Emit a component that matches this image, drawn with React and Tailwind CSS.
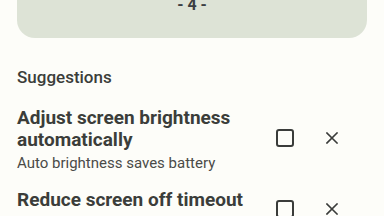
import React from "react";

function Check() {
  return <div className="w-[18px] h-[18px] border-2 border-[#3a3c3a] rounded-[3px]" />;
}

function XIcon() {
  return (
    <svg width="12" height="12" viewBox="0 0 12 12" className="block">
      <path d="M1 1 L11 11 M11 1 L1 11" stroke="#3a3c3a" strokeWidth="1.6" strokeLinecap="square" />
    </svg>
  );
}

function Row({ title, sub }) {
  return (
    <div className="flex items-center">
      <div className="flex-1 min-w-0">
        <div className="text-[19px] leading-[22px] font-bold text-[#3b3d3a] w-[240px]">{title}</div>
        <div className="text-[15px] leading-[20px] mt-[1.5px] text-[#4a4b48]">{sub}</div>
      </div>
      <div className="w-[18px] flex justify-center mb-[3px]"><Check /></div>
      <div className="w-[32px]" />
      <div className="w-[12px] flex justify-center mb-[3px]"><XIcon /></div>
      <div className="w-[29px]" />
    </div>
  );
}

export default function App() {
  return (
    <div className="w-[384px] h-[216px] overflow-hidden bg-[#fdfdf9]" style={{ fontFamily: "Roboto, 'Noto Sans', sans-serif" }}>
      <div className="px-[17px]">
        <div className="h-[38px] bg-[#dde3d6] rounded-b-[18px] flex justify-center">
          <div className="text-[16px] leading-[16px] font-bold text-[#3b3f44] mt-[-3.5px]">- 4 -</div>
        </div>
      </div>
      <div className="px-[17px]">
        <div className="mt-[27px] text-[17px] leading-[24px] font-medium text-[#3b3d3a]">Suggestions</div>
        <div className="mt-[18px] flex flex-col gap-[16.5px]">
          <Row title="Adjust screen brightness automatically" sub="Auto brightness saves battery" />
          <Row title="Reduce screen off timeout" sub="Screen off timeout saves battery" />
        </div>
      </div>
    </div>
  );
}
